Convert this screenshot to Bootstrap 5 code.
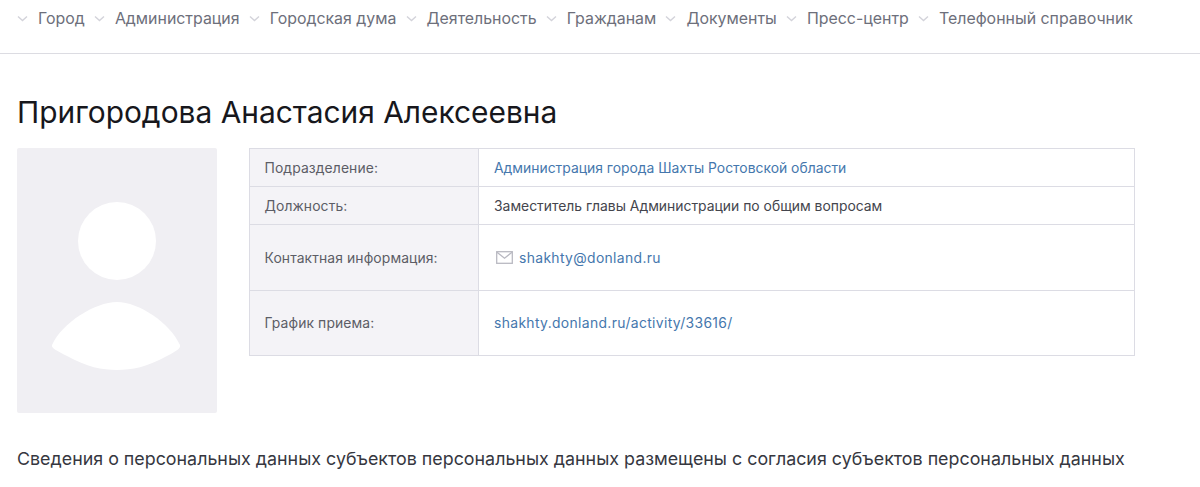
<!DOCTYPE html>
<html lang="ru">
<head>
<meta charset="utf-8">
<title>Пригородова Анастасия Алексеевна</title>
<link rel="stylesheet" href="https://cdn.jsdelivr.net/npm/bootstrap@5.3.0/dist/css/bootstrap.min.css">
<style>
html,body{height:487px;overflow:hidden}
body{font-family:Inter,"Noto Sans",sans-serif;background:#fff;color:#212529}
.topbar{height:54px;border-bottom:1px solid #dcdce2;padding:0 17px}
.topbar ul{height:38px;font-size:15.9px;color:#6d6f7b;gap:9.2px}
.topbar li{display:flex;align-items:center;gap:10px;white-space:nowrap}
.topbar svg{width:11px;height:7px;flex:none}
.page-wrap{padding:0 65px 0 17px}
.page-title{font-size:29.9px;font-weight:400;line-height:34px;margin:41px 0 19px;color:#17171c}
.photo-box{width:200px;height:265px;background:#f0eff3;border-radius:2px;flex:none}
.info-row{gap:32px}
.info-table{width:886px;height:207px;margin:0;table-layout:fixed;font-size:13.9px;border-color:#dcdce4}
.info-table th{width:229px;background:#f4f3f7;font-weight:400;color:#5c5d66;padding:1px 14.5px 0;vertical-align:middle;box-shadow:none;letter-spacing:.1px}
.info-table td{padding:1px 15px 0;vertical-align:middle;color:#44454d;box-shadow:none}
.info-table a{color:#4577ad;text-decoration:none}
.info-table a.latin-link{letter-spacing:.35px}
.row-short{height:38px}
.row-tall{height:66px}
.row-end{height:65px}
.mail-ico{width:17px;height:13px;margin:0 6px 3px 2px}
.note{font-size:17.85px;line-height:24px;margin:34px 0 0;color:#36373f;white-space:nowrap}
</style>
</head>
<body>
<nav class="topbar">
<ul class="list-unstyled d-flex align-items-center m-0">
<li><svg viewBox="0 0 11 7"><path d="M1 1.5l4.5 4 4.5-4" fill="none" stroke="#d3d3da" stroke-width="1.4"/></svg>Город</li>
<li><svg viewBox="0 0 11 7"><path d="M1 1.5l4.5 4 4.5-4" fill="none" stroke="#d3d3da" stroke-width="1.4"/></svg>Администрация</li>
<li><svg viewBox="0 0 11 7"><path d="M1 1.5l4.5 4 4.5-4" fill="none" stroke="#d3d3da" stroke-width="1.4"/></svg>Городская дума</li>
<li><svg viewBox="0 0 11 7"><path d="M1 1.5l4.5 4 4.5-4" fill="none" stroke="#d3d3da" stroke-width="1.4"/></svg>Деятельность</li>
<li><svg viewBox="0 0 11 7"><path d="M1 1.5l4.5 4 4.5-4" fill="none" stroke="#d3d3da" stroke-width="1.4"/></svg>Гражданам</li>
<li><svg viewBox="0 0 11 7"><path d="M1 1.5l4.5 4 4.5-4" fill="none" stroke="#d3d3da" stroke-width="1.4"/></svg>Документы</li>
<li><svg viewBox="0 0 11 7"><path d="M1 1.5l4.5 4 4.5-4" fill="none" stroke="#d3d3da" stroke-width="1.4"/></svg>Пресс-центр</li>
<li><svg viewBox="0 0 11 7"><path d="M1 1.5l4.5 4 4.5-4" fill="none" stroke="#d3d3da" stroke-width="1.4"/></svg>Телефонный справочник</li>
</ul>
</nav>
<main class="page-wrap">
<h1 class="page-title">Пригородова Анастасия Алексеевна</h1>
<div class="d-flex align-items-start info-row">
<div class="photo-box">
<svg width="200" height="265" viewBox="0 0 200 265"><circle cx="100" cy="93" r="39" fill="#fff"/><path d="M35 197C45 175 78 154 100 154C122 154 153 175 163 197C164 200 160 203 150 208C130 219 115 222 100 222C85 222 70 219 50 208C40 203 34 200 35 197Z" fill="#fff"/></svg>
</div>
<table class="table table-bordered info-table">
<tbody>
<tr class="row-short"><th scope="row">Подразделение:</th><td><a href="#">Администрация города Шахты Ростовской области</a></td></tr>
<tr class="row-short"><th scope="row">Должность:</th><td>Заместитель главы Администрации по общим вопросам</td></tr>
<tr class="row-tall"><th scope="row">Контактная информация:</th><td><svg class="mail-ico" viewBox="0 0 17 13"><rect x=".7" y=".7" width="15.6" height="11.6" fill="none" stroke="#b9b9c2" stroke-width="1.3"/><path d="M1 1.2l7.5 6 7.5-6" fill="none" stroke="#b9b9c2" stroke-width="1.3"/></svg><a class="latin-link" href="#">shakhty@donland.ru</a></td></tr>
<tr class="row-end"><th scope="row">График приема:</th><td><a class="latin-link" href="#">shakhty.donland.ru/activity/33616/</a></td></tr>
</tbody>
</table>
</div>
<p class="note">Сведения о персональных данных субъектов персональных данных размещены с согласия субъектов персональных данных</p>
</main>
</body>
</html>
